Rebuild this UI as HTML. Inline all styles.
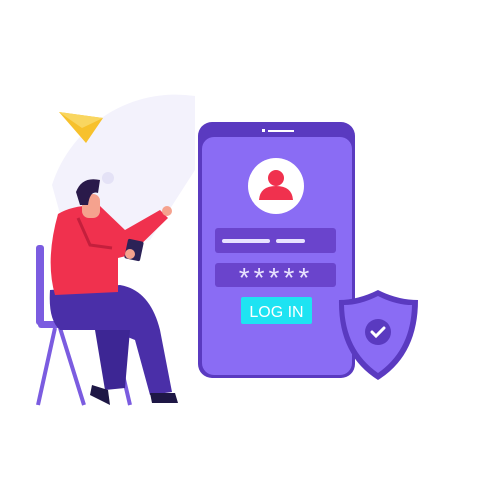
<!DOCTYPE html>
<html><head><style>
html,body{margin:0;padding:0;background:#fff;width:500px;height:500px;overflow:hidden}
svg{display:block}
</style></head><body>
<svg width="500" height="500" viewBox="0 0 500 500" xmlns="http://www.w3.org/2000/svg">
<path d="M52 185 A130 130 0 0 1 195 96 L195 170 L150 240 L70 250 Z" fill="#f3f2fc"/>
<circle cx="108" cy="178" r="6" fill="#e4e2f6"/>
<polygon points="59,112 103,118 86,143" fill="#f7c12c"/>
<polygon points="59,112 103,118 82,128" fill="#f9d660"/>
<!-- chair -->
<rect x="36" y="245" width="8" height="80" rx="3" fill="#7b5ce0"/>
<rect x="38" y="321" width="86" height="7" rx="3" fill="#7b5ce0"/>
<path d="M55 328 L38 405 M60 328 L84 405 M112 328 L130 405" stroke="#7b5ce0" stroke-width="4"/>
<!-- pants -->
<path d="M50 290 L120 285 Q150 290 160 330 L172 392 L150 395 L135 340 L110 330 L60 330 Q48 320 50 290 Z" fill="#4a2fa8"/>
<path d="M95 330 L130 330 L125 388 L105 390 Z" fill="#3d2694"/>
<path d="M150 393 L175 393 L178 403 L152 403 Z" fill="#1e1745"/>
<path d="M92 385 L108 390 L110 405 L90 395 Z" fill="#1e1745"/>
<!-- body -->
<path d="M58 214 Q75 204 100 206 L125 230 L160 210 L168 218 L130 255 L118 258 L118 292 L55 295 Q45 260 58 214 Z" fill="#f0314e"/>
<path d="M78 218 L90 245 L112 248" stroke="#c41f3c" stroke-width="3" fill="none"/>
<circle cx="167" cy="211" r="5" fill="#f5a28e"/>
<rect x="126" y="240" width="16" height="20" rx="2" fill="#2c2257" transform="rotate(12 134 250)"/>
<circle cx="130" cy="254" r="5" fill="#f5a28e"/>
<!-- head -->
<rect x="82" y="194" width="18" height="24" rx="7" fill="#f5a28e"/>
<path d="M76 192 Q82 176 100 180 L98 193 Q90 190 88 205 L80 205 Z" fill="#2a1a4a"/>
<!-- phone -->
<rect x="198" y="122" width="157" height="256" rx="14" fill="#5a3ac0"/>
<rect x="202" y="137" width="150" height="238" rx="12" fill="#8a6cf4"/>
<rect x="262" y="129" width="3" height="3" fill="#fff"/>
<rect x="268" y="130" width="26" height="2" fill="#fff"/>
<circle cx="276" cy="186" r="28" fill="#fff"/>
<circle cx="276" cy="178" r="8" fill="#f0314e"/>
<path d="M259 200 Q260 186 276 186 Q292 186 293 200 Z" fill="#f0314e"/>
<rect x="215" y="228" width="121" height="25" rx="3" fill="#6a44cc"/>
<rect x="222" y="239" width="48" height="4" rx="2" fill="#e8e2ff"/>
<rect x="276" y="239" width="29" height="4" rx="2" fill="#e8e2ff"/>
<rect x="215" y="263" width="121" height="24" rx="3" fill="#6a44cc"/>
<text x="276" y="287" font-family="Liberation Sans, sans-serif" font-size="28" fill="#e8e2ff" text-anchor="middle" letter-spacing="4">*****</text>
<rect x="241" y="297" width="71" height="27" rx="2" fill="#1ee3f2"/>
<text x="276.5" y="317" font-family="Liberation Sans, sans-serif" font-size="16" fill="#fff" text-anchor="middle">LOG IN</text>
<!-- shield -->
<path d="M378 290 Q358 300 339 300 Q338 355 378 380 Q418 355 418 300 Q398 300 378 290 Z" fill="#5a3ac0"/>
<path d="M378 296 Q360 305 344 305 Q345 350 378 373 Q411 350 412 305 Q396 305 378 296 Z" fill="#8a6cf4"/>
<circle cx="378" cy="332" r="13" fill="#5a3ac0"/>
<path d="M372 332 L376 336 L384 328" stroke="#fff" stroke-width="3" fill="none" stroke-linecap="round"/>
</svg>
</body></html>
